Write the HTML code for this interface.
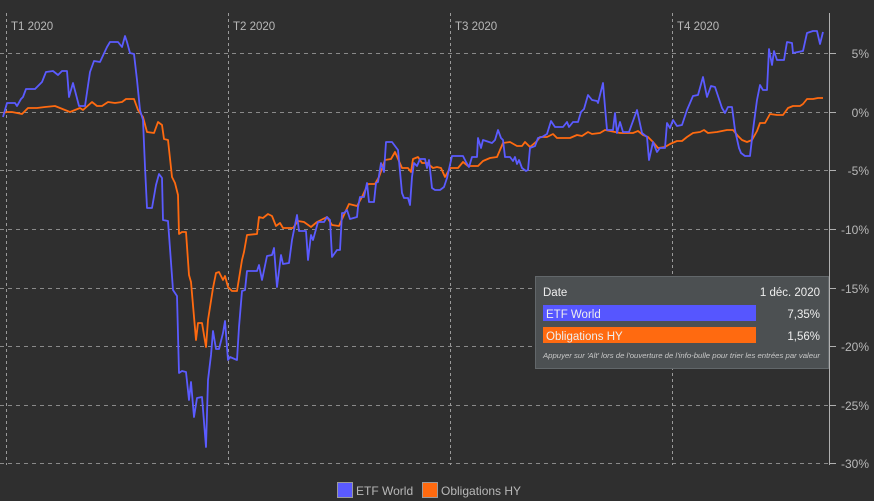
<!DOCTYPE html>
<html><head><meta charset="utf-8"><style>
html,body{margin:0;padding:0;background:#2f2f2f;width:874px;height:501px;overflow:hidden}
svg{display:block;font-family:"Liberation Sans",sans-serif}
</style></head><body>
<svg width="874" height="501" viewBox="0 0 874 501">
<rect width="874" height="501" fill="#2f2f2f"/>
<g stroke="#8a8a8a" stroke-width="1" stroke-dasharray="4,4">
<line x1="0" y1="53.5" x2="829" y2="53.5"/>
<line x1="0" y1="112.5" x2="829" y2="112.5"/>
<line x1="0" y1="170.5" x2="829" y2="170.5"/>
<line x1="0" y1="229.5" x2="829" y2="229.5"/>
<line x1="0" y1="288.5" x2="829" y2="288.5"/>
<line x1="0" y1="346.5" x2="829" y2="346.5"/>
<line x1="0" y1="405.5" x2="829" y2="405.5"/>
<line x1="0" y1="463.5" x2="829" y2="463.5"/>
</g>
<g stroke="#9a9a9a" stroke-width="1" stroke-dasharray="3,3">
<line x1="6.5" y1="13" x2="6.5" y2="465"/>
<line x1="228.5" y1="13" x2="228.5" y2="465"/>
<line x1="450.5" y1="13" x2="450.5" y2="465"/>
<line x1="672.5" y1="13" x2="672.5" y2="465"/>
</g>
<line x1="829.5" y1="13" x2="829.5" y2="465" stroke="#b0b0b0" stroke-width="1"/>
<g stroke="#b0b0b0"><line x1="829" y1="53.5" x2="836" y2="53.5"/><line x1="829" y1="112.5" x2="836" y2="112.5"/><line x1="829" y1="170.5" x2="836" y2="170.5"/><line x1="829" y1="229.5" x2="836" y2="229.5"/><line x1="829" y1="288.5" x2="836" y2="288.5"/><line x1="829" y1="346.5" x2="836" y2="346.5"/><line x1="829" y1="405.5" x2="836" y2="405.5"/><line x1="829" y1="463.5" x2="836" y2="463.5"/></g>
<g fill="#b8b8b8" font-size="12" text-anchor="end">
<text x="869" y="58">5%</text><text x="869" y="117">0%</text><text x="869" y="175">-5%</text><text x="869" y="234">-10%</text><text x="869" y="293">-15%</text><text x="869" y="351">-20%</text><text x="869" y="410">-25%</text><text x="869" y="468">-30%</text>
</g>
<g fill="#b8b8b8" font-size="11.5">
<text x="11" y="30">T1 2020</text><text x="233" y="30">T2 2020</text><text x="455" y="30">T3 2020</text><text x="677" y="30">T4 2020</text>
</g>
<polyline fill="none" stroke="#ff6a10" stroke-width="1.8" stroke-linejoin="round" points="3,113 7,112 12,112 17,113 22,114 28,108 37,108 45,107 55,106 65,110 70,112 80,108 83,110 92,102 97,106 102,106 108,102 115,103 122,102 126,99 134,99 138,110 143,117 147,132 154,133 158,122 162,125 164,139 168,140 172,177 175,183 178,195 179,234 182,232 186,232 189,275 191,282 196,340 198,323 202,323 206,347 208,320 213,288 216,273 219,272 223,280 225,276 228,287 232,291 237,291 242,260 244,252 247,235 257,234 259,217 263,218 268,214 272,216 276,226 280,223 283,228 293,228 298,221 304,222 311,227 317,222 327,217 332,225 339,226 343,217 349,204 357,206 362,197 368,184 375,184 379,177 385,160 391,159 395,152 402,168 408,168 411,172 413,159 418,157 422,163 427,163 433,168 437,167 441,168 445,177 450,168 458,168 463,162 468,166 478,166 483,161 490,158 497,157 503,143 510,142 517,146 522,146 525,142 530,147 537,141 540,137 547,137 553,134 557,138 570,138 577,135 582,136 588,132 592,134 600,133 605,130 615,132 620,133 633,133 638,131 643,135 648,137 653,142 658,148 665,147 670,144 677,141 682,141 687,137 693,133 700,132 704,130 708,133 717,132 727,130 733,130 738,136 742,140 747,142 752,140 757,131 760,123 765,123 770,114 777,115 783,115 788,108 793,106 800,106 803,104 807,99 813,99 818,98 823,98"/>
<polyline fill="none" stroke="#5b5bff" stroke-width="1.8" stroke-linejoin="round" points="3,117 7,103 15,103 17,106 21,99 23,97 26,89 35,89 42,82 46,72 53,71 58,75 62,71 67,71 69,97 73,83 79,106 85,106 90,72 94,61 100,62 107,47 110,42 118,42 122,47 125,36 127,42 130,53 134,54 137,80 140,110 143,120 145,167 147,208 152,208 156,185 159,174 162,178 163,220 168,221 173,290 177,296 179,373 182,371 186,372 189,400 191,382 194,417 197,398 202,397 206,447 208,380 211,355 213,331 216,349 219,349 223,333 225,321 228,360 230,357 237,360 239,327 242,291 245,290 247,271 257,271 259,265 262,280 267,256 272,255 274,248 277,287 281,255 283,264 289,263 292,240 297,215 299,231 306,231 308,260 311,235 313,240 318,222 324,222 327,217 330,220 332,257 337,250 340,250 342,213 344,213 347,210 350,219 357,217 358,207 360,197 364,197 367,183 369,202 374,202 376,183 378,182 381,163 384,172 386,142 392,142 398,150 402,193 404,198 408,198 410,205 412,177 414,163 417,166 420,159 425,159 427,168 429,160 432,188 435,190 440,190 444,187 447,178 452,156 463,156 466,162 469,167 472,157 477,157 478,138 481,148 483,140 492,143 495,140 498,130 501,138 503,140 505,157 510,157 513,161 515,157 517,164 519,160 522,168 526,171 528,170 530,148 535,146 538,138 542,137 547,134 551,121 555,127 563,127 567,122 569,127 573,122 578,122 581,112 584,109 588,95 592,100 597,101 598,103 603,83 605,107 607,130 613,130 615,113 617,133 620,122 623,132 629,132 637,110 642,133 647,137 649,160 653,142 657,152 660,148 665,148 667,123 670,128 673,120 677,126 682,125 687,110 693,96 698,95 703,77 707,97 711,86 715,87 722,108 725,113 728,107 732,107 735,130 739,148 741,153 745,156 750,156 753,130 757,100 760,85 763,90 767,90 769,49 772,65 774,51 777,60 784,60 787,42 792,43 793,53 803,51 807,33 813,31 817,31 820,44 823,32"/>
<rect x="535.5" y="276.5" width="293" height="92" fill="#4c5052" stroke="#62676a"/>
<g font-size="11.5" fill="#eeeeee">
<text x="543" y="296">Date</text><text x="820" y="296" text-anchor="end">1 déc. 2020</text>
<rect x="543" y="305" width="213" height="16" fill="#5656ff"/>
<text x="546" y="318">ETF World</text><text x="820" y="318" text-anchor="end">7,35%</text>
<rect x="543" y="327" width="213" height="16" fill="#ff6a10"/>
<text x="546" y="340">Obligations HY</text><text x="820" y="340" text-anchor="end">1,56%</text>
</g>
<text x="543" y="358" font-size="7.4" font-style="italic" fill="#c8c8c8" textLength="277" lengthAdjust="spacingAndGlyphs">Appuyer sur 'Alt' lors de l'ouverture de l'info-bulle pour trier les entrées par valeur</text>
<rect x="337.5" y="482.5" width="15" height="15" fill="#5a5aff" stroke="#9a9a9a"/>
<text x="356" y="495" font-size="12" fill="#b8b8b8">ETF World</text>
<rect x="422.5" y="482.5" width="15" height="15" fill="#ff6a10" stroke="#9a9a9a"/>
<text x="441" y="495" font-size="12" fill="#b8b8b8">Obligations HY</text>
</svg>
</body></html>
